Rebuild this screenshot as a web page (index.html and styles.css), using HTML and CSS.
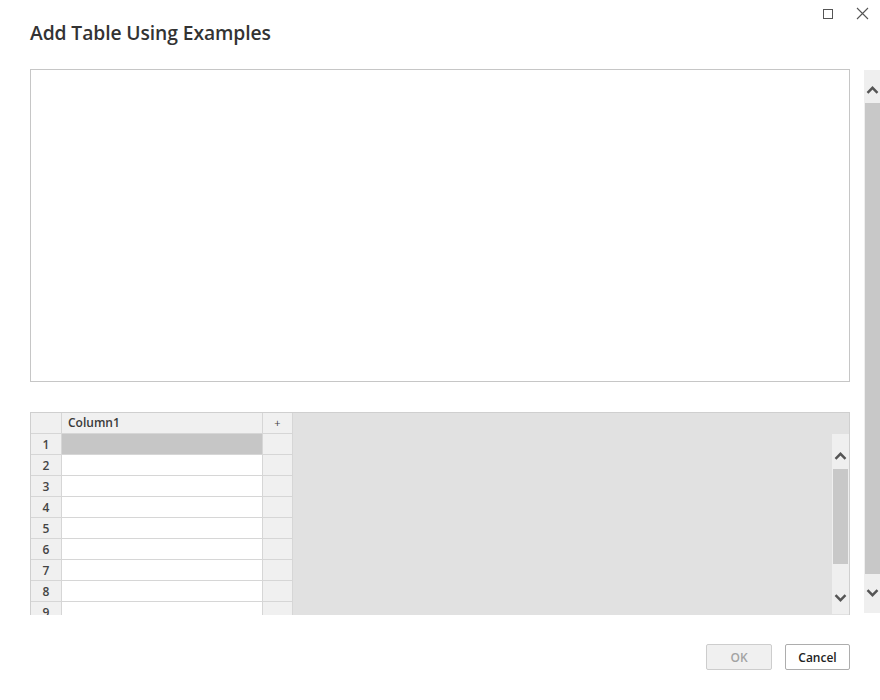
FILE: index.html
```html
<!DOCTYPE html>
<html>
<head>
<meta charset="utf-8">
<link rel="stylesheet" href="styles.css">
</head>
<body>
<div class="dialog">
  <div class="titlebar">
    <h1 class="title">Add Table Using Examples</h1>
    <div class="winctl">
      <svg class="ic-max" width="12" height="12" viewBox="0 0 12 12"><rect x="1.5" y="1.5" width="9" height="9" fill="none" stroke="#555" stroke-width="1"/></svg>
      <svg class="ic-close" width="13" height="13" viewBox="0 0 13 13"><path d="M1 1 L12 12 M12 1 L1 12" stroke="#555" stroke-width="1.1" fill="none"/></svg>
    </div>
  </div>
  <div class="body">
    <div class="main">
      <div class="preview"></div>
      <div class="grid">
        <div class="table">
          <div class="row head">
            <div class="c num"></div>
            <div class="c col">Column1</div>
            <div class="c add">+</div>
          </div>
          <div class="row"><div class="c num">1</div><div class="c col sel"></div><div class="c add"></div></div>
          <div class="row"><div class="c num">2</div><div class="c col"></div><div class="c add"></div></div>
          <div class="row"><div class="c num">3</div><div class="c col"></div><div class="c add"></div></div>
          <div class="row"><div class="c num">4</div><div class="c col"></div><div class="c add"></div></div>
          <div class="row"><div class="c num">5</div><div class="c col"></div><div class="c add"></div></div>
          <div class="row"><div class="c num">6</div><div class="c col"></div><div class="c add"></div></div>
          <div class="row"><div class="c num">7</div><div class="c col"></div><div class="c add"></div></div>
          <div class="row"><div class="c num">8</div><div class="c col"></div><div class="c add"></div></div>
          <div class="row"><div class="c num">9</div><div class="c col"></div><div class="c add"></div></div>
        </div>
        <div class="filler">
          <div class="vscroll inner">
            <div class="sb-up"><svg width="13" height="8" viewBox="0 0 13 8"><path d="M1.5 6.8 L6.5 1.8 L11.5 6.8" stroke="#555" stroke-width="2.4" fill="none"/></svg></div>
            <div class="sb-thumb"></div>
            <div class="sb-down"><svg width="13" height="8" viewBox="0 0 13 8"><path d="M1.5 1.2 L6.5 6.2 L11.5 1.2" stroke="#555" stroke-width="2.4" fill="none"/></svg></div>
          </div>
        </div>
      </div>
      <div class="footer">
        <button class="btn ok" disabled>OK</button>
        <button class="btn cancel">Cancel</button>
      </div>
    </div>
    <div class="vscroll outer">
      <div class="sb-up"><svg width="13" height="8" viewBox="0 0 13 8"><path d="M1.5 6.8 L6.5 1.8 L11.5 6.8" stroke="#555" stroke-width="2.4" fill="none"/></svg></div>
      <div class="sb-thumb"></div>
      <div class="sb-down"><svg width="13" height="8" viewBox="0 0 13 8"><path d="M1.5 1.2 L6.5 6.2 L11.5 1.2" stroke="#555" stroke-width="2.4" fill="none"/></svg></div>
    </div>
  </div>
</div>
</body>
</html>
```
FILE: styles.css
```css
* { box-sizing: border-box; }
html, body { margin: 0; padding: 0; background: #fff; }
body { font-family: "Open Sans", "Noto Sans", "Liberation Sans", sans-serif; color: #333; }
.dialog { width: 880px; height: 700px; position: relative; }
.titlebar { display: flex; justify-content: space-between; align-items: flex-start; height: 69px; }
.title { margin: 0; padding: 20px 0 0 30px; font-size: 19.3px; font-weight: 600; line-height: 26px; color: #333; letter-spacing: -0.1px; }
.winctl { display: flex; gap: 22px; padding: 7px 11px 0 0; align-items: center; }
.body { display: flex; gap: 14px; padding-left: 30px; }
.main { width: 820px; display: flex; flex-direction: column; }
.preview { height: 313px; border: 1px solid #c6c6c6; background: #fff; }
.grid { margin-top: 30px; height: 203px; border: 1px solid #cfcfcf; border-bottom: none; display: flex; overflow: hidden; background: #e1e1e1; }
.table { width: 262px; display: flex; flex-direction: column; flex: none; }
.row { display: flex; height: 21px; flex: none; }
.c { height: 21px; border-bottom: 1px solid #d6d6d6; border-right: 1px solid #d6d6d6; font-size: 12px; font-weight: 600; line-height: 20px; padding-top: 1px; color: #444; }
.num { width: 31px; background: #f0f0f0; text-align: center; }
.col { width: 201px; background: #fff; padding-left: 6px; }
.add { width: 30px; background: #f0f0f0; text-align: center; font-weight: 400; font-size: 11px; }
.head .c { padding-top: 0; }
.head .col { background: #f0f0f0; color: #3a3a3a; }
.sel { background: #c6c6c6; }
.filler { flex: 1; display: flex; justify-content: flex-end; padding-top: 21px; }
.vscroll { display: flex; flex-direction: column; align-items: center; background: #efefef; }
.vscroll svg { display: block; }
.inner { width: 17px; height: 180px; }
.inner .sb-up { height: 35px; padding-top: 18px; }
.inner .sb-thumb { width: 15px; height: 95px; background: #c8c8c8; }
.inner .sb-down { height: 50px; padding-top: 30px; }
.outer { width: 16px; height: 543px; margin-top: 1px; }
.outer .sb-up { height: 33px; padding-top: 16px; }
.outer .sb-thumb { width: 15px; height: 471px; background: #c8c8c8; }
.outer .sb-down { height: 39px; padding-top: 15px; }
.footer { display: flex; justify-content: flex-end; gap: 13px; padding-top: 29px; }
.btn { height: 26px; border-radius: 2px; font-family: "Open Sans", "Noto Sans", sans-serif; font-size: 12px; font-weight: 600; padding: 0; }
.ok { width: 66px; background: #f0f0f0; border: 1px solid #cdcdcd; color: #a3a3a3; }
.cancel { width: 65px; background: #fff; border: 1px solid #adadad; color: #222; }
```
